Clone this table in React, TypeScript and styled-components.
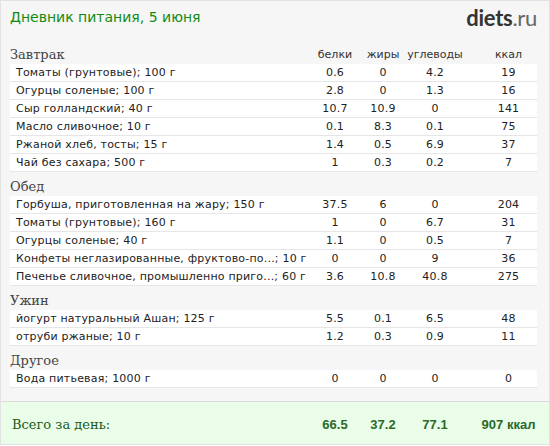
import React from 'react';
import styled, { createGlobalStyle } from 'styled-components';

const GlobalStyle = createGlobalStyle`
  html, body {
    margin: 0;
    padding: 0;
    background: #ffffff;
  }
`;

const Page = styled.div`
  width: 550px;
  height: 445px;
  box-sizing: border-box;
  border: 1px solid #e2e2e2;
  background-color: #f6f6f6;
  display: flex;
  flex-direction: column;
  font-family: 'DejaVu Sans', Verdana, sans-serif;
`;

const Header = styled.div`
  height: 32px;
  display: flex;
  align-items: center;
  justify-content: space-between;
  padding: 0 12px 0 9px;
`;

const Title = styled.h1`
  margin: 0;
  font-size: 14px;
  font-weight: normal;
  color: #128a12;
`;

const Logo = styled.div`
  font-family: Lato, 'Open Sans', sans-serif;
  font-size: 22px;
  color: #333333;
  letter-spacing: -0.3px;
`;

const LogoBold = styled.span`
  font-weight: bold;
`;

const LogoLight = styled.span`
  font-weight: normal;
  color: #666666;
`;

const Content = styled.div`
  flex: 1;
  padding: 11px 12px 0 9px;
`;

const Section = styled.div`
  margin-bottom: 4px;
`;

const Grid = styled.div`
  display: grid;
  grid-template-columns: minmax(0, 1fr) 50px 46px 58px 73px;
  align-items: center;
`;

const SectionHead = styled(Grid)`
  height: 20px;
`;

const SectionName = styled.div`
  font-family: 'DejaVu Serif', Georgia, serif;
  font-size: 13px;
  color: #444444;
`;

const ColLabel = styled.div<{ $kcal?: boolean }>`
  font-size: 11px;
  color: #333333;
  text-align: center;
  padding-left: ${(p) => (p.$kcal ? '16px' : '0')};
`;

const Row = styled(Grid)`
  height: 17px;
  background-color: #ffffff;
  border-bottom: 1px solid #e6e6e6;
  font-size: 11px;
  letter-spacing: 0.2px;
  color: #222222;
`;

const Name = styled.div`
  padding-left: 6px;
  white-space: nowrap;
`;

const Num = styled.div<{ $kcal?: boolean }>`
  text-align: center;
  padding-left: ${(p) => (p.$kcal ? '16px' : '0')};
`;

const Footer = styled(Grid)`
  height: 40px;
  border-top: 1px solid #dadada;
  background-color: #e9fde9;
  padding: 2px 12px 0 9px;
`;

const TotalLabel = styled.div`
  font-family: 'DejaVu Serif', Georgia, serif;
  font-size: 13px;
  color: #1a5a1a;
  padding-left: 2px;
`;

const TotalNum = styled.div<{ $kcal?: boolean }>`
  font-family: 'Liberation Sans', Arial, sans-serif;
  font-weight: bold;
  font-size: 13px;
  color: #2a6a2a;
  text-align: center;
  padding-left: ${(p) => (p.$kcal ? '16px' : '0')};
`;

type Item = [string, string, string, string, string];

const meals: { name: string; items: Item[] }[] = [
  {
    name: 'Завтрак',
    items: [
      ['Томаты (грунтовые); 100 г', '0.6', '0', '4.2', '19'],
      ['Огурцы соленые; 100 г', '2.8', '0', '1.3', '16'],
      ['Сыр голландский; 40 г', '10.7', '10.9', '0', '141'],
      ['Масло сливочное; 10 г', '0.1', '8.3', '0.1', '75'],
      ['Ржаной хлеб, тосты; 15 г', '1.4', '0.5', '6.9', '37'],
      ['Чай без сахара; 500 г', '1', '0.3', '0.2', '7'],
    ],
  },
  {
    name: 'Обед',
    items: [
      ['Горбуша, приготовленная на жару; 150 г', '37.5', '6', '0', '204'],
      ['Томаты (грунтовые); 160 г', '1', '0', '6.7', '31'],
      ['Огурцы соленые; 40 г', '1.1', '0', '0.5', '7'],
      ['Конфеты неглазированные, фруктово-по...; 10 г', '0', '0', '9', '36'],
      ['Печенье сливочное, промышленно приго...; 60 г', '3.6', '10.8', '40.8', '275'],
    ],
  },
  {
    name: 'Ужин',
    items: [
      ['йогурт натуральный Ашан; 125 г', '5.5', '0.1', '6.5', '48'],
      ['отруби ржаные; 10 г', '1.2', '0.3', '0.9', '11'],
    ],
  },
  {
    name: 'Другое',
    items: [['Вода питьевая; 1000 г', '0', '0', '0', '0']],
  },
];

export default function App() {
  return (
    <>
      <GlobalStyle />
      <Page>
        <Header>
          <Title>Дневник питания, 5 июня</Title>
          <Logo>
            <LogoBold>diets</LogoBold>
            <LogoLight>.ru</LogoLight>
          </Logo>
        </Header>
        <Content>
          {meals.map((meal, i) => (
            <Section key={meal.name}>
              <SectionHead>
                <SectionName>{meal.name}</SectionName>
                {i === 0 && (
                  <>
                    <ColLabel>белки</ColLabel>
                    <ColLabel>жиры</ColLabel>
                    <ColLabel>углеводы</ColLabel>
                    <ColLabel $kcal>ккал</ColLabel>
                  </>
                )}
              </SectionHead>
              {meal.items.map((it, j) => (
                <Row key={j}>
                  <Name>{it[0]}</Name>
                  <Num>{it[1]}</Num>
                  <Num>{it[2]}</Num>
                  <Num>{it[3]}</Num>
                  <Num $kcal>{it[4]}</Num>
                </Row>
              ))}
            </Section>
          ))}
        </Content>
        <Footer>
          <TotalLabel>Всего за день:</TotalLabel>
          <TotalNum>66.5</TotalNum>
          <TotalNum>37.2</TotalNum>
          <TotalNum>77.1</TotalNum>
          <TotalNum $kcal>907 ккал</TotalNum>
        </Footer>
      </Page>
    </>
  );
}
